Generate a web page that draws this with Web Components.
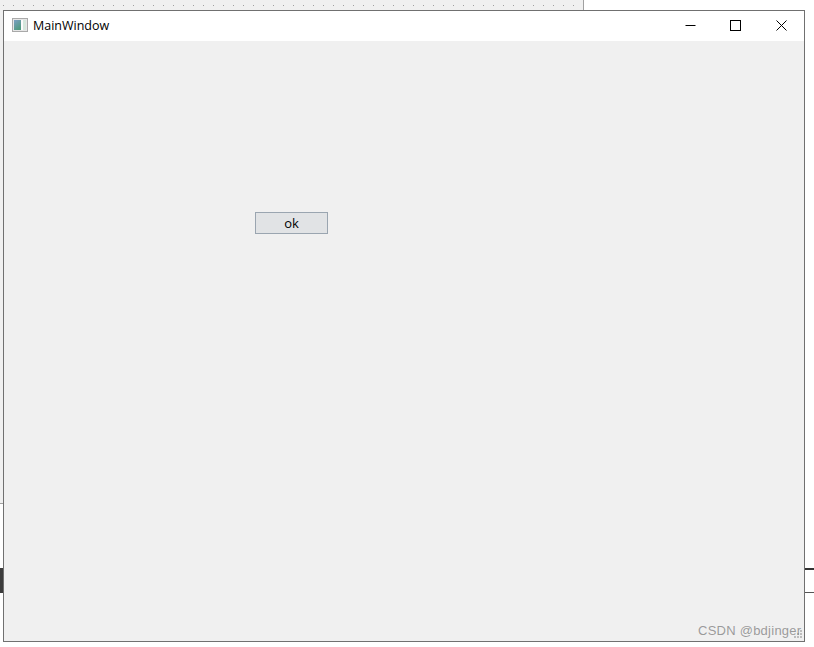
<!DOCTYPE html>
<html>
<head>
<meta charset="utf-8">
<style>
  html, body {
    margin: 0;
    padding: 0;
    background: #fff;
  }
  body {
    width: 814px;
    height: 647px;
    overflow: hidden;
    font-family: "Open Sans", "Liberation Sans", Arial, sans-serif;
  }
</style>
</head>
<body>
<designer-backdrop>
  <main-window title-text="MainWindow">
    <push-button>ok</push-button>
  </main-window>
  <span slot="mark">CSDN @bdjinger</span>
</designer-backdrop>

<script>
// backdrop: the Qt designer form peeking out behind the running window
class DesignerBackdrop extends HTMLElement {
  constructor() {
    super();
    const shadow = this.attachShadow({ mode: "open" });
    shadow.innerHTML = `
    <style>
      :host {
        display: block;
        position: relative;
        width: 814px;
        height: 647px;
        overflow: hidden;
        background: #fff;
      }
      .form {
        position: absolute;
        left: 0;
        top: 0;
        width: 583px;
        height: 503px;
        background-color: #f0f0f0;
        background-image: radial-gradient(circle at 0.5px 0.5px, #a0a0a0 0.6px, transparent 0.7px);
        background-size: 10px 10px;
        background-position: 3px 5px;
        border-right: 1px solid #a0a0a0;
        border-bottom: 1px solid #a0a0a0;
      }
      .dark {
        position: absolute;
        left: 0;
        top: 568px;
        width: 4px;
        height: 25px;
        background: #3c3c3c;
      }
      .line-a {
        position: absolute;
        left: 804px;
        top: 568px;
        width: 10px;
        height: 2px;
        background: #333;
      }
      .line-b {
        position: absolute;
        left: 804px;
        top: 592px;
        width: 10px;
        height: 1px;
        background: #555;
      }
      .win {
        position: absolute;
        left: 3px;
        top: 10px;
      }
      .mark {
        position: absolute;
        left: 698px;
        top: 622px;
        font: 13px/17px "Liberation Sans", Arial, sans-serif;
        color: rgba(120, 120, 120, 0.72);
        letter-spacing: 0.25px;
        white-space: nowrap;
      }
    </style>
    <div class="form"></div>
    <div class="dark"></div>
    <div class="line-a"></div>
    <div class="line-b"></div>
    <div class="win"><slot></slot></div>
    <div class="mark"><slot name="mark"></slot></div>
    `;
  }
}

class MainWindow extends HTMLElement {
  constructor() {
    super();
    const shadow = this.attachShadow({ mode: "open" });
    shadow.innerHTML = `
    <style>
      :host {
        display: flex;
        flex-direction: column;
        box-sizing: border-box;
        width: 802px;
        height: 632px;
        border: 1px solid #707070;
        background: #f0f0f0;
      }
      .titlebar {
        flex: none;
        display: flex;
        align-items: center;
        height: 30px;
        background: #fff;
      }
      .app-icon {
        flex: none;
        margin: 0 5px 2px 8px;
        display: block;
      }
      .title {
        flex: 1;
        font: 12.5px/18px "Open Sans", "Liberation Sans", Arial, sans-serif;
        color: #000;
        margin-bottom: 1px;
      }
      .caption {
        flex: none;
        display: flex;
        margin-bottom: 1px;
      }
      .caption span {
        display: flex;
        align-items: center;
        justify-content: center;
        width: 45px;
        height: 29px;
      }
      .caption span:nth-child(2) {
        margin-right: 1px;
      }
      .caption svg {
        display: block;
      }
      .client {
        flex: 1;
        position: relative;
      }
      .grip {
        position: absolute;
        right: 1px;
        bottom: 2px;
        display: block;
      }
    </style>
    <div class="titlebar">
      <svg class="app-icon" width="16" height="14" viewBox="0 0 16 14">
        <defs>
          <linearGradient id="pane" x1="0" y1="0" x2="0.6" y2="1">
            <stop offset="0" stop-color="#7c9fc4"/>
            <stop offset="1" stop-color="#4f9a7f"/>
          </linearGradient>
        </defs>
        <rect x="0.5" y="0.5" width="15" height="13" fill="#e6e6e6" stroke="#a9a9a9"/>
        <rect x="2" y="2" width="7" height="10" fill="url(#pane)"/>
        <rect x="9" y="2" width="2" height="10" fill="#fbfbfb"/>
        <rect x="11" y="2" width="3" height="10" fill="#d5e6dc"/>
      </svg>
      <div class="title"></div>
      <div class="caption">
        <span><svg width="11" height="11" viewBox="0 0 11 11"><path d="M0.5 5.5H10.5" stroke="#000" fill="none"/></svg></span>
        <span><svg width="11" height="11" viewBox="0 0 11 11"><rect x="0.5" y="0.5" width="10" height="10" stroke="#000" fill="none"/></svg></span>
        <span><svg width="11" height="11" viewBox="0 0 11 11"><path d="M0.5 0.5L10.5 10.5M10.5 0.5L0.5 10.5" stroke="#000" fill="none"/></svg></span>
      </div>
    </div>
    <div class="client">
      <slot></slot>
      <svg class="grip" width="9" height="9" viewBox="0 0 9 9" fill="#bdbdbd">
        <rect x="6" y="0" width="2" height="2"/>
        <rect x="3" y="3" width="2" height="2"/>
        <rect x="6" y="3" width="2" height="2"/>
        <rect x="0" y="6" width="2" height="2"/>
        <rect x="3" y="6" width="2" height="2"/>
        <rect x="6" y="6" width="2" height="2"/>
      </svg>
    </div>
    `;
    shadow.querySelector(".title").textContent = this.getAttribute("title-text");
  }
}

class PushButton extends HTMLElement {
  constructor() {
    super();
    const shadow = this.attachShadow({ mode: "open" });
    shadow.innerHTML = `
    <style>
      :host {
        position: absolute;
        left: 251px;
        top: 171px;
        box-sizing: border-box;
        display: flex;
        align-items: center;
        justify-content: center;
        width: 73px;
        height: 22px;
        background: #e1e3e5;
        border: 1px solid #9aa5b0;
        font: 13px/16px "Open Sans", "Liberation Sans", Arial, sans-serif;
        color: #000;
      }
    </style>
    <slot></slot>
    `;
  }
}

customElements.define("designer-backdrop", DesignerBackdrop);
customElements.define("main-window", MainWindow);
customElements.define("push-button", PushButton);
</script>
</body>
</html>
